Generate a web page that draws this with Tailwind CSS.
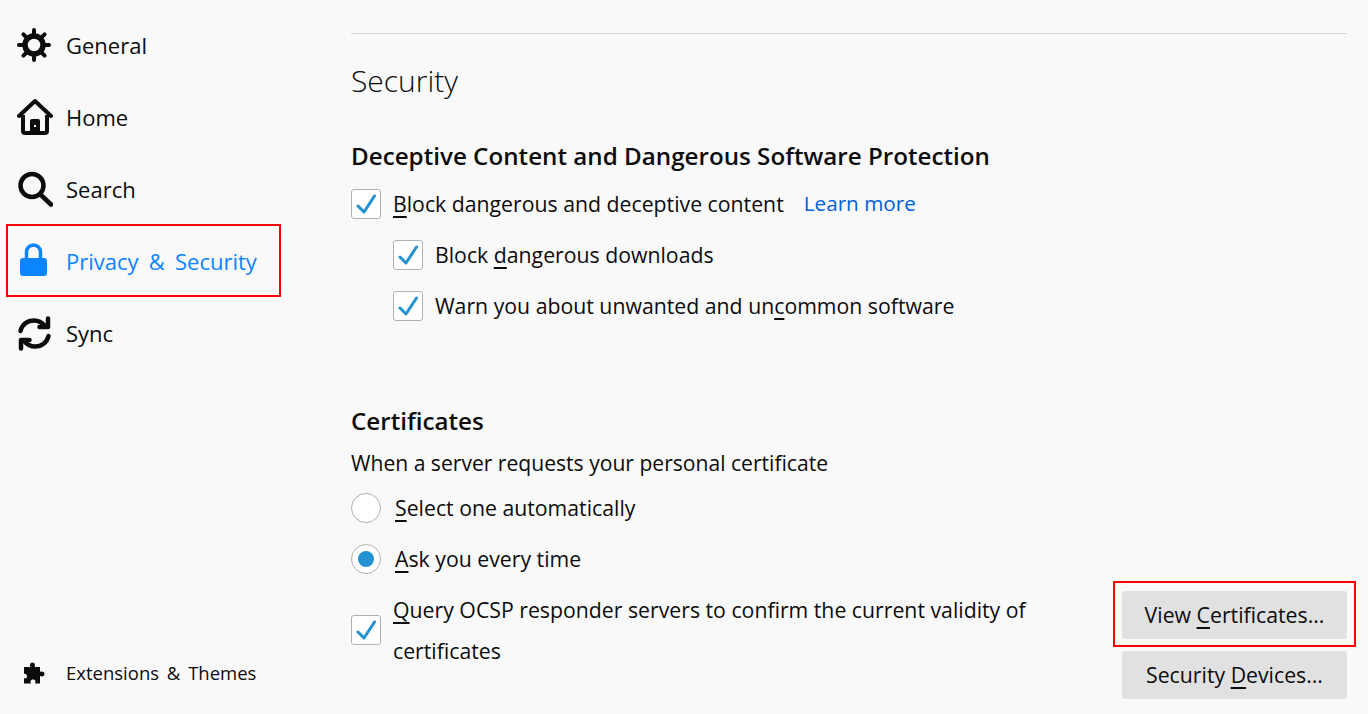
<!DOCTYPE html>
<html>

<head>
    <title>Firefox Preferences</title>
    <script src="https://cdn.jsdelivr.net/npm/@tailwindcss/browser@4"></script>
    <meta name="viewport" content="width=device-width, initial-scale=1.0">
</head>

<body class="relative flex w-[1368px] h-[714px] overflow-hidden bg-[#f9f9fa] text-[#0c0c0d] font-['Open_Sans',sans-serif] text-[21.25px]">
    <!-- Sidebar -->
    <div class="flex flex-col justify-between w-[351px] pt-[9px] pb-[23px] shrink-0 text-[22px]">
        <div>
            <div class="flex items-center h-[72px] pl-[17px]">
                <svg class="w-[36px] h-[36px] mr-[13px]" viewBox="0 0 36 36" fill="none" stroke="#0c0c0d">
                    <circle cx="17" cy="18" r="9" stroke-width="5.500" />
                    <path d="M17 3v5M17 28v5M2 18h5M27 18h5M6.400 7.400l3.500 3.500M24.100 25.100l3.500 3.500M6.400 28.600l3.500-3.500M24.100 10.900l3.500-3.500" stroke-width="4" stroke-linecap="round" />
                </svg>
                <span>General</span>
            </div>
            <div class="flex items-center h-[72px] pl-[17px]">
                <svg class="w-[36px] h-[36px] mr-[13px]" viewBox="0 0 36 36" fill="none">
                    <path d="M2 17L18 2l16 15" stroke="#0c0c0d" stroke-width="4" stroke-linecap="round" stroke-linejoin="round" />
                    <path d="M6 16v16a2 2 0 0 0 2 2h20a2 2 0 0 0 2-2V16" stroke="#0c0c0d" stroke-width="4" />
                    <path d="M13 34V22a2 2 0 0 1 2-2h6a2 2 0 0 1 2 2v12z" fill="#0c0c0d" />
                    <rect x="17" y="26" width="2" height="2" fill="#f9f9fa" />
                </svg>
                <span>Home</span>
            </div>
            <div class="flex items-center h-[72px] pl-[17px]">
                <svg class="w-[36px] h-[36px] mr-[13px]" viewBox="0 0 36 36" fill="none" stroke="#0c0c0d" stroke-width="4.500" stroke-linecap="round">
                    <circle cx="15" cy="14.500" r="11.500" />
                    <path d="M24 24l10 9.500" />
                </svg>
                <span>Search</span>
            </div>
            <div class="flex items-center h-[72px] pl-[17px] text-[#0a84ff]">
                <svg class="w-[36px] h-[36px] mr-[13px]" viewBox="0 0 36 36" fill="none">
                    <path d="M9.500 16V9a7 7 0 0 1 14 0v7" stroke="#0a84ff" stroke-width="3.500" />
                    <rect x="3" y="15" width="27" height="18" rx="3" fill="#0a84ff" />
                </svg>
                <span class="[word-spacing:4.500px]">Privacy &amp; Security</span>
            </div>
            <div class="flex items-center h-[72px] pl-[17px]">
                <svg class="w-[36px] h-[36px] mr-[13px]" viewBox="0 0 36 36" fill="none" stroke="#0c0c0d" stroke-width="4.500" stroke-linecap="round" stroke-linejoin="round">
                    <path d="M3.500 16C5 9.500 10.500 5.500 17 5.500c4.500 0 8 2 11 5.500" />
                    <path d="M31 3.500V12h-8.500" />
                    <path d="M31.500 21C30 27.500 24.500 31.500 18 31.500c-4.500 0-8-2-11-5.500" />
                    <path d="M4 33.500V25h8.500" />
                </svg>
                <span>Sync</span>
            </div>
        </div>
        <div class="flex items-center h-[36px] pl-[24px] text-[18.500px]">
            <svg class="w-[22px] h-[22px] mr-[20px]" viewBox="0 0 22 22" fill="#0c0c0d">
                <path d="M0 5h6.500C5.500 3.500 6 .500 8.500.500S11.500 3.500 10.500 5H16v5c1.500-1 4.500-.500 4.500 2s-3 3-4.500 2v7.500h-5c1-1.500.500-4-2-4s-3 2.500-2 4H0v-5.500c1.500 1 3 .500 3-1.500S1.500 11 0 12z" />
            </svg>
            <span class="[word-spacing:3px]">Extensions &amp; Themes</span>
        </div>
    </div>

    <!-- Content -->
    <div class="flex-1 pt-[33px] pr-[21px]">
        <hr class="border-[#d7d7db]">
        <h1 class="mt-[23px] h-[48px] leading-[48px] text-[30px] font-light">Security</h1>

        <h2 class="mt-[31px] h-[40px] leading-[40px] text-[24.200px] font-semibold">Deceptive Content and Dangerous Software Protection</h2>
        <div class="flex items-center h-[51px] mt-[2px]">
            <div class="flex items-center justify-center w-[30px] h-[30px] mr-[12px] bg-white border border-[#b1b1b3] rounded-[3px]">
                <svg class="w-[20px] h-[20px]" viewBox="0 0 20 20" fill="none" stroke="#2292d0" stroke-width="3" stroke-linecap="round" stroke-linejoin="round"><path d="M2 12l6 6L18.500 2" /></svg>
            </div>
            <span><u class="underline-offset-4">B</u>lock dangerous and deceptive content</span>
            <a class="ml-[20px] text-[20.700px] text-[#0060df]">Learn more</a>
        </div>
        <div class="flex items-center h-[51px] pl-[42px]">
            <div class="flex items-center justify-center w-[30px] h-[30px] mr-[12px] bg-white border border-[#b1b1b3] rounded-[3px]">
                <svg class="w-[20px] h-[20px]" viewBox="0 0 20 20" fill="none" stroke="#2292d0" stroke-width="3" stroke-linecap="round" stroke-linejoin="round"><path d="M2 12l6 6L18.500 2" /></svg>
            </div>
            <span>Block <u class="underline-offset-4">d</u>angerous downloads</span>
        </div>
        <div class="flex items-center h-[51px] pl-[42px]">
            <div class="flex items-center justify-center w-[30px] h-[30px] mr-[12px] bg-white border border-[#b1b1b3] rounded-[3px]">
                <svg class="w-[20px] h-[20px]" viewBox="0 0 20 20" fill="none" stroke="#2292d0" stroke-width="3" stroke-linecap="round" stroke-linejoin="round"><path d="M2 12l6 6L18.500 2" /></svg>
            </div>
            <span>Warn you about unwanted and un<u class="underline-offset-4">c</u>ommon software</span>
        </div>

        <h2 class="mt-[70px] h-[40px] leading-[40px] text-[24.200px] font-semibold">Certificates</h2>
        <p class="h-[42px] leading-[44px] text-[21.100px]">When a server requests your personal certificate</p>
        <div class="flex items-center h-[51px] mt-[-1px]">
            <div class="w-[30px] h-[30px] mr-[14px] bg-white border border-[#b1b1b3] rounded-full"></div>
            <span><u class="underline-offset-4">S</u>elect one automatically</span>
        </div>
        <div class="flex items-center h-[51px]">
            <div class="flex items-center justify-center w-[30px] h-[30px] mr-[14px] bg-white border border-[#b1b1b3] rounded-full">
                <div class="w-[16px] h-[16px] bg-[#2292d0] rounded-full"></div>
            </div>
            <span><u class="underline-offset-4">A</u>sk you every time</span>
        </div>
        <div class="flex justify-between">
            <div class="flex items-center h-[82px] mt-[5px]">
                <div class="flex items-center justify-center w-[30px] h-[30px] mr-[12px] bg-white border border-[#b1b1b3] rounded-[3px]">
                    <svg class="w-[20px] h-[20px]" viewBox="0 0 20 20" fill="none" stroke="#2292d0" stroke-width="3" stroke-linecap="round" stroke-linejoin="round"><path d="M2 12l6 6L18.500 2" /></svg>
                </div>
                <span class="leading-[41px]"><u class="underline-offset-4">Q</u>uery OCSP responder servers to confirm the current validity of<br>certificates</span>
            </div>
            <div class="flex flex-col gap-[12px] mt-[7px]">
                <button class="w-[225px] h-[48px] bg-[#e1e1e2] rounded-[3px]">View <u class="underline-offset-4">C</u>ertificates...</button>
                <button class="w-[225px] h-[48px] bg-[#e1e1e2] rounded-[3px]">Security <u class="underline-offset-4">D</u>evices...</button>
            </div>
        </div>
    </div>

    <!-- Red highlight boxes drawn over the page -->
    <div class="absolute left-[6px] top-[224px] w-[275px] h-[73px] border-2 border-[#ff0000]"></div>
    <div class="absolute left-[1113px] top-[581px] w-[243px] h-[66px] border-2 border-[#ff0000]"></div>
</body>

</html>
